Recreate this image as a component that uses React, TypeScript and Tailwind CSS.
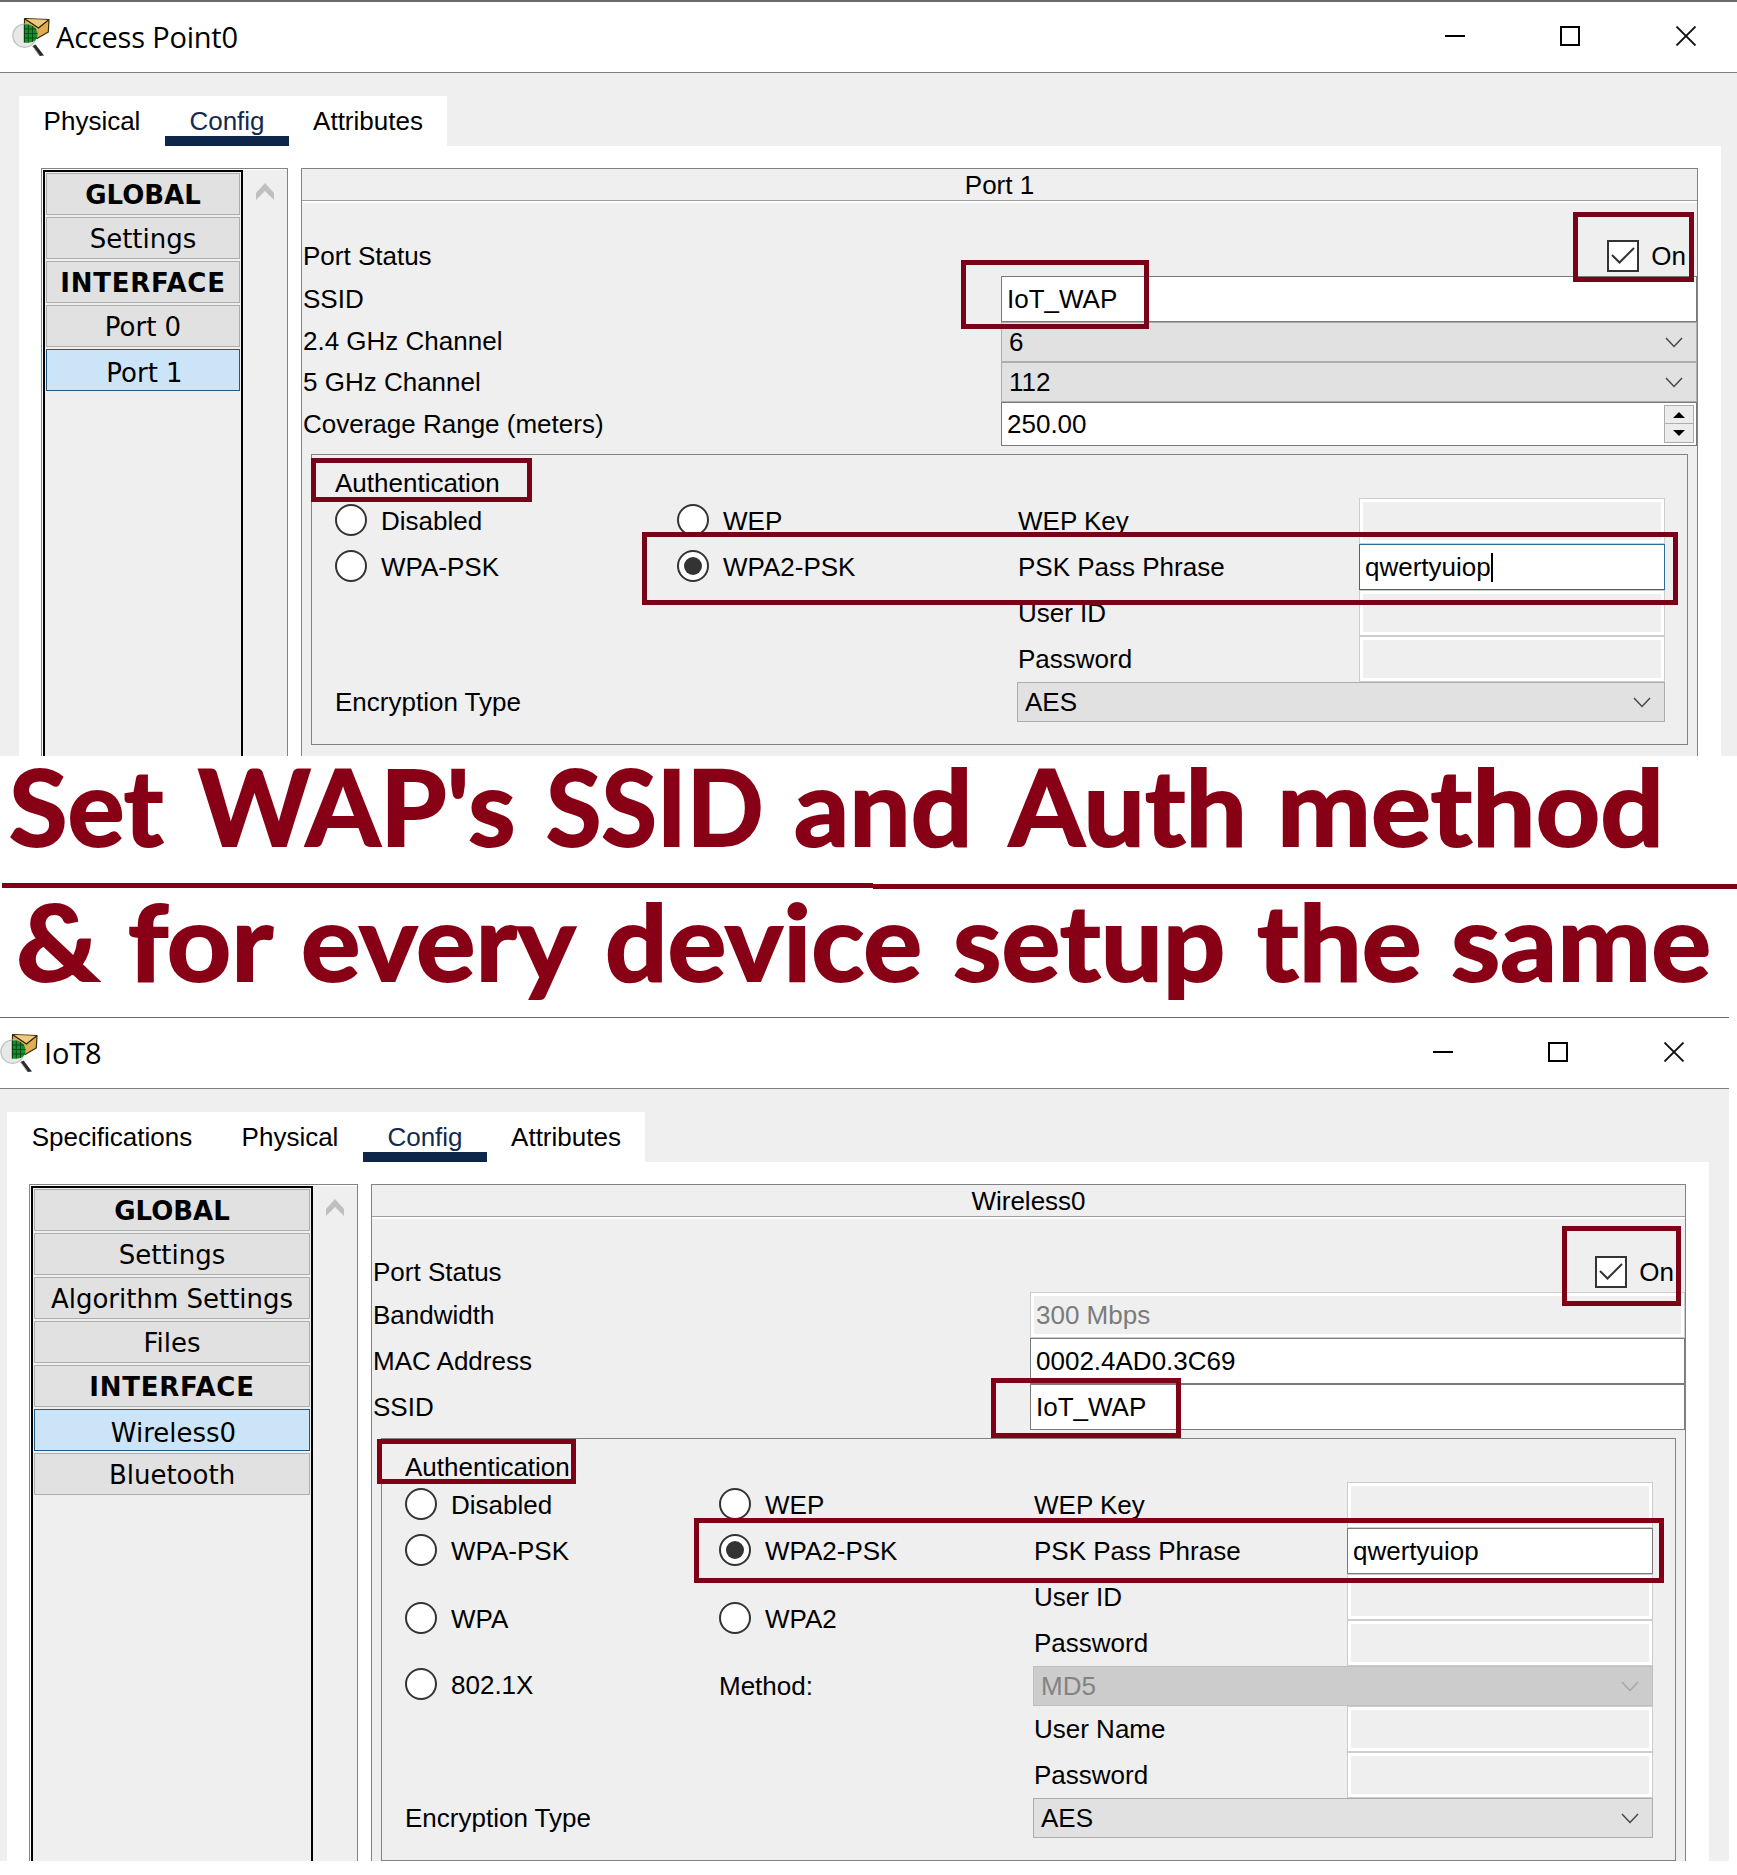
import type { ReactNode } from "react";

const BORDER = "border border-[#828287]";

function AppIcon() {
  return (
    <svg width="38" height="40" viewBox="0 0 38 40" className="shrink-0">
      <path d="M12.5 1.5 L37 2.5 L36.3 15 L25 21.5 L12.5 14 Z" fill="#dfae52" stroke="#3a2a0c" strokeWidth="1.2" strokeLinejoin="round" />
      <path d="M13 2 L26.5 11 L36.5 3" fill="#efca7d" stroke="#2b1f08" strokeWidth="1.3" />
      <path d="M20.5 29 L23.5 27.5 L32 38.5 L27.5 39 Z" fill="#2a2a2a" />
      <path d="M20.5 29 L27.5 38.5" stroke="#a5a5a5" strokeWidth="1" />
      <circle cx="12.5" cy="18.7" r="11.6" fill="#e6e9e6" stroke="#bcc1be" strokeWidth="1.3" />
      <path d="M12 7.5 C19 6.5 25.5 11 25.5 17.5 C25.5 24 20 26.5 12 25.5 Z" fill="#15902a" />
      <path d="M16.3 7.5 V25.5 M20.5 9 V25 M12 12 H24 M12 16.5 H25.5 M12 21 H24.5" stroke="#0a4a14" strokeWidth="1" />
      <path d="M12.3 7.5 V25.5" stroke="#0a2f0e" strokeWidth="1" />
    </svg>
  );
}

function TitleBar({ title, padding }: { title: string; padding: string }) {
  return (
    <div className={`flex h-[71px] items-center justify-between border-b border-[#808080] bg-white ${padding}`}>
      <div className="flex items-center gap-[6px]">
        <AppIcon />
        <span className="font-['Open_Sans'] text-[29px] leading-[40px] tracking-[-0.2px] text-black">{title}</span>
      </div>
      <div className="mb-[2px] flex h-[22px] items-center gap-[95px]">
        <div className="h-[2px] w-[20px] bg-black" />
        <div className="h-[20px] w-[20px] border-2 border-black" />
        <svg width="22" height="20" viewBox="0 0 22 20">
          <path d="M1.5 0.5 L20.5 19.5 M20.5 0.5 L1.5 19.5" stroke="#111" strokeWidth="1.8" />
        </svg>
      </div>
    </div>
  );
}

function Tab({ label, width, active }: { label: string; width: string; active?: boolean }) {
  return (
    <div className={`relative flex h-[50px] justify-center ${width}`}>
      <span className={`whitespace-nowrap pt-[10px] leading-[30px] ${active ? "text-[#14294e]" : "text-black"}`}>{label}</span>
      {active && <div className="absolute inset-x-0 bottom-0 h-[10px] bg-[#0d264a]" />}
    </div>
  );
}

type NavItem = { label: string; head?: boolean; active?: boolean };

function Sidebar({ items, width, listWidth, height }: { items: NavItem[]; width: string; listWidth: string; height: string }) {
  return (
    <div className={`flex overflow-hidden border border-b-0 border-[#828287] bg-white pl-px pt-px ${width} ${height}`}>
      <div className={`flex shrink-0 flex-col gap-[2px] border-2 border-b-0 border-black bg-[#efefef] p-px font-['DejaVu_Sans'] ${listWidth}`}>
        {items.map((item) => (
          <div
            key={item.label}
            className={`flex h-[42px] shrink-0 items-center justify-center whitespace-nowrap border ${
              item.active ? "border-[#26597f] bg-[#cce4f7] pl-[3px] pt-[6px]" : "border-[#adadad] bg-[#e1e1e1] pt-[2px]"
            } ${item.head ? "font-bold" : ""} ${item.label === "INTERFACE" ? "tracking-[0.75px]" : ""}`}
          >
            {item.label}
          </div>
        ))}
      </div>
      <div className="flex grow justify-center bg-[#efefef] pt-[13px]">
        <svg width="18" height="17" viewBox="0 0 18 17">
          <path d="M9 0 L18 10 V17 L9 8 L0 17 V10 Z" fill="#bfbfbf" />
        </svg>
      </div>
    </div>
  );
}

function Field({ children, state = "normal" }: { children?: ReactNode; state?: "normal" | "focus" | "disabled" }) {
  const look =
    state === "disabled"
      ? "border-[#cccccc] bg-white p-[3px]"
      : state === "focus"
        ? "border-[#2b6d93] bg-white pl-[5px]"
        : "border-[#7a7a7a] bg-white pl-[5px]";
  return (
    <div className={`flex h-full w-full items-center border ${look}`}>
      {state === "disabled" ? (
        <div className="flex h-full w-full items-center bg-[#efefef] pl-[2px] text-[#7b7b7b]">{children}</div>
      ) : (
        children
      )}
    </div>
  );
}

function Combo({ value, disabled }: { value: string; disabled?: boolean }) {
  return (
    <div
      className={`flex h-full w-full items-center justify-between border pl-[7px] pr-[13px] ${
        disabled ? "border-[#bfbfbf] bg-[#cccccc] text-[#838383]" : "border-[#adadad] bg-[#e1e1e1]"
      }`}
    >
      <span>{value}</span>
      <svg width="18" height="11" viewBox="0 0 18 11">
        <path d="M1 1 L9 9.5 L17 1" fill="none" stroke={disabled ? "#a6a6a6" : "#444"} strokeWidth="1.4" />
      </svg>
    </div>
  );
}

function Spin({ value }: { value: string }) {
  return (
    <div className="flex h-full w-full items-center justify-between border border-[#7a7a7a] bg-white pl-[5px] pr-[2px]">
      <span>{value}</span>
      <div className="flex h-[38px] w-[30px] flex-col border border-[#adadad] bg-[#ececec]">
        <div className="flex h-[18px] items-center justify-center border-b border-[#adadad]">
          <svg width="12" height="6" viewBox="0 0 12 6">
            <path d="M6 0 L12 6 H0 Z" />
          </svg>
        </div>
        <div className="flex grow items-center justify-center">
          <svg width="12" height="6" viewBox="0 0 12 6">
            <path d="M6 6 L12 0 H0 Z" />
          </svg>
        </div>
      </div>
    </div>
  );
}

function Row({ label, height, left, children }: { label: string; height: string; left: string; children: ReactNode }) {
  return (
    <div className={`flex items-center pl-px ${height}`}>
      <span className={`shrink-0 whitespace-nowrap ${left}`}>{label}</span>
      <div className="h-full grow">{children}</div>
    </div>
  );
}

function StatusRow() {
  return (
    <div className="flex h-[40px] items-center justify-between pl-px pr-[11px]">
      <span>Port Status</span>
      <div className="flex items-center gap-[12px]">
        <div className="flex h-[32px] w-[32px] items-center justify-center border-2 border-[#333] bg-white">
          <svg width="24" height="20" viewBox="0 0 24 20">
            <path d="M1 9 L8.5 16.5 L23 2" fill="none" stroke="#333" strokeWidth="2" />
          </svg>
        </div>
        <span>On</span>
      </div>
    </div>
  );
}

function Radio({ label, checked, span, lift = "" }: { label: string; checked?: boolean; span?: boolean; lift?: string }) {
  return (
    <div className={`flex items-center gap-[14px] ${span ? "row-span-2" : ""} ${lift}`}>
      <div className="mb-[2px] flex h-[32px] w-[32px] items-center justify-center rounded-full border-2 border-[#333] bg-white">
        {checked && <div className="h-[18px] w-[18px] rounded-full bg-[#333]" />}
      </div>
      <span>{label}</span>
    </div>
  );
}

function Cell({ children, wide, text = true }: { children?: ReactNode; wide?: boolean; text?: boolean }) {
  return <div className={`flex items-center ${wide ? "col-span-2" : ""} ${text ? "pl-px" : ""}`}>{children}</div>;
}

function Panel({ title, width, height, children }: { title: string; width: string; height: string; children: ReactNode }) {
  return (
    <div className={`flex flex-col border border-b-0 border-[#828287] bg-[#efefef] ${width} ${height}`}>
      <div className="h-[32px] shrink-0 border-b border-[#a0a0a0] text-center leading-[33px]">{title}</div>
      <div className="h-[2px] shrink-0 bg-white" />
      <div className="flex grow flex-col pt-[33px]">{children}</div>
    </div>
  );
}

function Mark({ place }: { place: string }) {
  return <div className={`pointer-events-none absolute border-[5px] ${place}`} />;
}

function AccessPointWindow() {
  return (
    <section className="h-[756px] w-full overflow-hidden border-t-2 border-[#6b6b6b] bg-[#efefef]">
      <TitleBar title="Access Point0" padding="pl-[12px] pr-[40px]" />
      <div className="pl-[19px] pr-[16px] pt-[23px]">
        <div className="flex h-[50px] w-[428px] bg-white">
          <Tab label="Physical" width="w-[146px]" />
          <Tab label="Config" width="w-[124px]" active />
          <Tab label="Attributes" width="w-[158px]" />
        </div>
        <div className="flex h-[620px] gap-[13px] bg-white pl-[22px] pt-[22px]">
          <Sidebar
            width="w-[247px]"
            listWidth="w-[200px]"
            height="h-[590px]"
            items={[
              { label: "GLOBAL", head: true },
              { label: "Settings" },
              { label: "INTERFACE", head: true },
              { label: "Port 0" },
              { label: "Port 1", active: true },
            ]}
          />
          <Panel title="Port 1" width="w-[1397px]" height="h-[590px]">
            <StatusRow />
            <Row label="SSID" height="h-[46px]" left="w-[698px]">
              <Field>IoT_WAP</Field>
            </Row>
            <Row label="2.4 GHz Channel" height="h-[40px]" left="w-[698px] pb-[2px]">
              <Combo value="6" />
            </Row>
            <Row label="5 GHz Channel" height="h-[40px]" left="w-[698px]">
              <Combo value="112" />
            </Row>
            <Row label="Coverage Range (meters)" height="h-[44px]" left="w-[698px]">
              <Spin value="250.00" />
            </Row>
            <div className={`ml-[9px] mt-[8px] h-[291px] w-[1377px] pl-[23px] pt-[10px] ${BORDER}`}>
              <div className="h-[33px] leading-[36px]">Authentication</div>
              <div className="grid grid-cols-[342px_340px_342px_306px] grid-rows-[46px_46px_46px_46px_40px]">
                <Radio label="Disabled" />
                <Radio label="WEP" />
                <Cell>WEP Key</Cell>
                <Field state="disabled" />
                <Radio label="WPA-PSK" />
                <Radio label="WPA2-PSK" checked />
                <Cell>PSK Pass Phrase</Cell>
                <Field state="focus">
                  <span>qwertyuiop</span>
                  <span className="h-[29px] w-[2px] bg-black" />
                </Field>
                <Cell wide />
                <Cell>User ID</Cell>
                <Field state="disabled" />
                <Cell wide />
                <Cell>Password</Cell>
                <Field state="disabled" />
                <Cell wide text={false}>Encryption Type</Cell>
                <Cell wide text={false}>
                  <Combo value="AES" />
                </Cell>
              </div>
            </div>
          </Panel>
        </div>
      </div>
    </section>
  );
}

type Word = { text: string; box: string; stretch: string };

const LINE_ONE: Word[] = [
  { text: "Set", box: "w-[189px]", stretch: "scale-x-[1.007]" },
  { text: "WAP's", box: "w-[348px]", stretch: "scale-x-[1.013]" },
  { text: "SSID", box: "w-[248px]", stretch: "scale-x-[0.953]" },
  { text: "and", box: "w-[215px]", stretch: "scale-x-[1.027]" },
  { text: "Auth", box: "w-[268px]", stretch: "scale-x-[1.028]" },
  { text: "method", box: "w-[400px]", stretch: "scale-x-[1.06]" },
];

const LINE_TWO: Word[] = [
  { text: "&", box: "w-[112px]", stretch: "scale-x-[1.087]" },
  { text: "for", box: "w-[173px]", stretch: "scale-x-[1.06]" },
  { text: "every", box: "w-[304px]", stretch: "scale-x-[1.05]" },
  { text: "device", box: "w-[348px]", stretch: "scale-x-[1.04]" },
  { text: "setup", box: "w-[304px]", stretch: "scale-x-[1.039]" },
  { text: "the", box: "w-[194px]", stretch: "scale-x-[1.057]" },
  { text: "same", box: "w-[270px]", stretch: "scale-x-[1.058]" },
];

function CaptionLine({ words, className }: { words: Word[]; className: string }) {
  return (
    <div className={`flex [-webkit-text-stroke:2px_#880015] [stroke-linejoin:round] ${className}`}>
      {words.map((word) => (
        <span key={word.text} className={`shrink-0 ${word.box}`}>
          <span className={`inline-block w-max origin-left ${word.stretch}`}>{word.text}</span>
        </span>
      ))}
    </div>
  );
}

function Caption() {
  return (
    <section className="flex h-[261px] flex-col whitespace-nowrap bg-white font-['Lato'] text-[106px] font-bold text-[#880015]">
      <CaptionLine words={LINE_ONE} className="h-[127px] pl-[9px] leading-[99px]" />
      <div className="flex h-[6px] pl-[2px]">
        <div className="h-[5px] w-[871px] bg-[#800018]" />
        <div className="mt-px h-[5px] grow bg-[#800018]" />
      </div>
      <CaptionLine words={LINE_TWO} className="h-[128px] pl-[16px] leading-[103px]" />
    </section>
  );
}

function IotWindow() {
  return (
    <section className="h-[844px] w-[1729px] overflow-hidden border-t border-[#6b6b6b] bg-[#efefef]">
      <TitleBar title="IoT8" padding="pl-0 pr-[44px]" />
      <div className="pl-[7px] pr-[20px] pt-[23px]">
        <div className="flex h-[50px] w-[638px] bg-white">
          <Tab label="Specifications" width="w-[210px]" />
          <Tab label="Physical" width="w-[146px]" />
          <Tab label="Config" width="w-[124px]" active />
          <Tab label="Attributes" width="w-[158px]" />
        </div>
        <div className="flex h-[700px] gap-[13px] bg-white pl-[22px] pt-[22px]">
          <Sidebar
            width="w-[329px]"
            listWidth="w-[282px]"
            height="h-[678px]"
            items={[
              { label: "GLOBAL", head: true },
              { label: "Settings" },
              { label: "Algorithm Settings" },
              { label: "Files" },
              { label: "INTERFACE", head: true },
              { label: "Wireless0", active: true },
              { label: "Bluetooth" },
            ]}
          />
          <Panel title="Wireless0" width="w-[1315px]" height="h-[678px]">
            <StatusRow />
            <Row label="Bandwidth" height="h-[46px]" left="w-[657px]">
              <Field state="disabled">300 Mbps</Field>
            </Row>
            <Row label="MAC Address" height="h-[46px]" left="w-[657px]">
              <Field>0002.4AD0.3C69</Field>
            </Row>
            <Row label="SSID" height="h-[46px]" left="w-[657px]">
              <Field>IoT_WAP</Field>
            </Row>
            <div className={`ml-[9px] mt-[8px] h-[423px] w-[1295px] pl-[23px] pt-[10px] ${BORDER}`}>
              <div className="h-[33px] leading-[36px]">Authentication</div>
              <div className="grid grid-cols-[314px_314px_314px_306px] grid-rows-[46px_46px_46px_46px_40px_46px_46px_40px]">
                <Radio label="Disabled" />
                <Radio label="WEP" />
                <Cell>WEP Key</Cell>
                <Field state="disabled" />
                <Radio label="WPA-PSK" />
                <Radio label="WPA2-PSK" checked />
                <Cell>PSK Pass Phrase</Cell>
                <Field>qwertyuiop</Field>
                <Radio label="WPA" span lift="pb-[2px]" />
                <Radio label="WPA2" span lift="pb-[2px]" />
                <Cell>User ID</Cell>
                <Field state="disabled" />
                <Cell>Password</Cell>
                <Field state="disabled" />
                <Radio label="802.1X" lift="pb-[2px]" />
                <Cell text={false}>Method:</Cell>
                <Cell wide text={false}>
                  <Combo value="MD5" disabled />
                </Cell>
                <Cell wide />
                <Cell>User Name</Cell>
                <Field state="disabled" />
                <Cell wide />
                <Cell>Password</Cell>
                <Field state="disabled" />
                <Cell wide text={false}>Encryption Type</Cell>
                <Cell wide text={false}>
                  <Combo value="AES" />
                </Cell>
              </div>
            </div>
          </Panel>
        </div>
      </div>
    </section>
  );
}

export default function App() {
  return (
    <main className="relative h-[1875px] w-[1737px] overflow-hidden bg-white font-['Liberation_Sans'] text-[26px] leading-[30px] text-black">
      <AccessPointWindow />
      <Caption />
      <IotWindow />
      <div className="h-[14px] bg-white" />
      <Mark place="left-[1573px] top-[212px] h-[70px] w-[121px] border-[#780318]" />
      <Mark place="left-[961px] top-[260px] h-[69px] w-[188px] border-[#780318]" />
      <Mark place="left-[311px] top-[458px] h-[44px] w-[221px] border-[#780318]" />
      <Mark place="left-[642px] top-[532px] h-[73px] w-[1036px] border-[#780318]" />
      <Mark place="left-[1562px] top-[1226px] h-[80px] w-[119px] border-[#800016]" />
      <Mark place="left-[991px] top-[1378px] h-[60px] w-[190px] border-[#800016]" />
      <Mark place="left-[377px] top-[1439px] h-[45px] w-[199px] border-[#800016]" />
      <Mark place="left-[694px] top-[1518px] h-[65px] w-[970px] border-[#800016]" />
    </main>
  );
}
